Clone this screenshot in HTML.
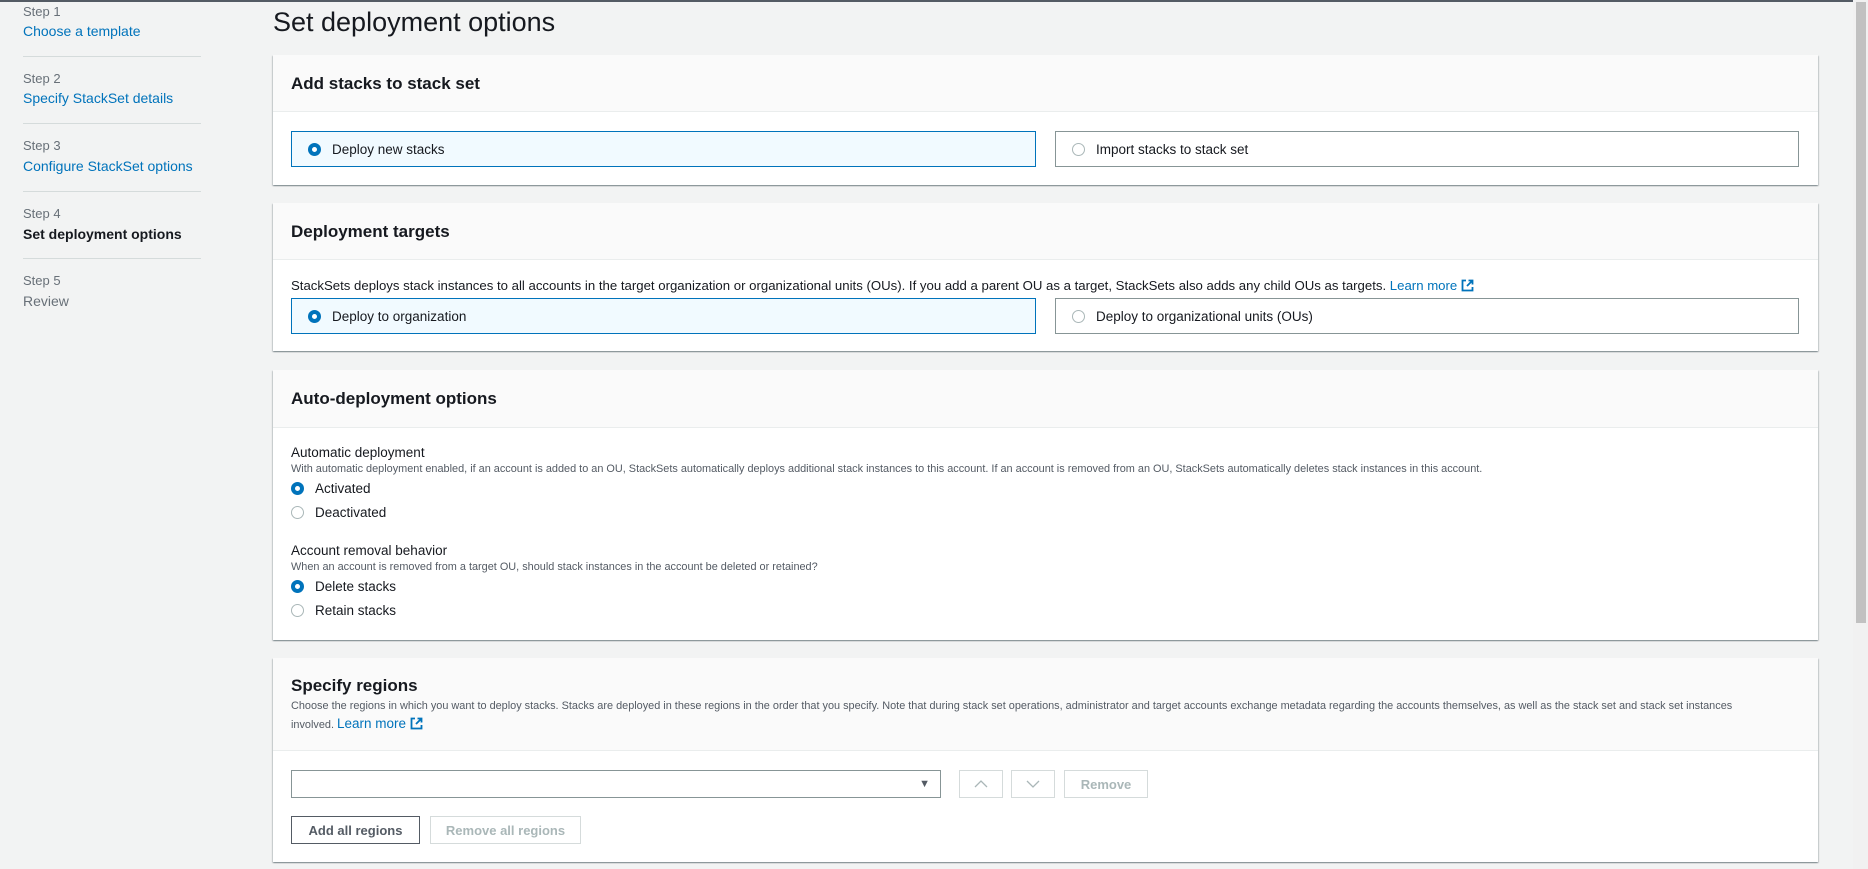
<!DOCTYPE html>
<html><head><meta charset="utf-8"><style>
*{box-sizing:border-box;margin:0;padding:0}
body{width:1868px;height:869px;overflow:hidden;background:#f2f3f3;font-family:"Liberation Sans",sans-serif;color:#16191f;position:relative}
.a{position:absolute;white-space:nowrap}
.top{position:absolute;left:0;top:0;width:1853px;height:2px;background:#545b64}
.sb{position:absolute;left:1853px;top:0;width:15px;height:869px;background:#f1f1f1}
.sb div{position:absolute;left:3px;top:2px;width:10px;height:621px;background:#c1c1c1}
.step{font-size:13px;color:#687078}
.lnk{font-size:14px;color:#0073bb}
.div{position:absolute;left:23px;width:178px;height:1px;background:#d5dbdb}
.panel{position:absolute;left:273px;width:1545px;background:#fff;box-shadow:0 1px 1px 0 rgba(0,28,36,.3),1px 1px 1px 0 rgba(0,28,36,.15),-1px 1px 1px 0 rgba(0,28,36,.15)}
.hd{position:absolute;left:0;top:0;width:100%;background:#fafafa;border-bottom:1px solid #eaeded}
.h2{font-size:17px;font-weight:bold}
.box{position:absolute;height:36px;border:1px solid #879596;font-size:13.5px;display:flex;align-items:center;padding-left:16px}
.box.sel{background:#f1faff;border-color:#0073bb}
.r{display:inline-block;width:13px;height:13px;border-radius:50%;border:1px solid #aab7b8;background:#fff;margin-right:11px;flex:none}
.r.on{border:4px solid #0073bb}
.t14{font-size:13.5px}
.t12{font-size:10.9px;color:#545b64}
.btn{position:absolute;border:1px solid #d5dbdb;background:#fff;color:#aab7b8;font-size:13px;font-weight:bold;display:flex;align-items:center;justify-content:center}
.ext{display:inline-block;vertical-align:-2px;margin-left:4px}
</style></head><body>
<div class="top"></div>
<div class="sb"><div></div></div>

<div class="a step" style="left:23px;top:4px">Step 1</div>
<div class="a lnk" style="left:23px;top:23px">Choose a template</div>
<div class="div" style="top:56px"></div>
<div class="a step" style="left:23px;top:71px">Step 2</div>
<div class="a lnk" style="left:23px;top:90px">Specify StackSet details</div>
<div class="div" style="top:123px"></div>
<div class="a step" style="left:23px;top:138px">Step 3</div>
<div class="a lnk" style="left:23px;top:158px">Configure StackSet options</div>
<div class="div" style="top:191px"></div>
<div class="a step" style="left:23px;top:206px">Step 4</div>
<div class="a lnk" style="left:23px;top:226px;color:#16191f;font-weight:bold">Set deployment options</div>
<div class="div" style="top:258px"></div>
<div class="a step" style="left:23px;top:273px">Step 5</div>
<div class="a lnk" style="left:23px;top:293px;color:#687078">Review</div>

<div class="a" style="left:273px;top:7px;font-size:27px;color:#16191f">Set deployment options</div>

<div class="panel" style="top:55px;height:130px">
 <div class="hd" style="height:57px"><div class="a h2" style="left:18px;top:19px">Add stacks to stack set</div></div>
 <div class="box sel" style="left:18px;top:76px;width:745px"><span class="r on"></span>Deploy new stacks</div>
 <div class="box" style="left:782px;top:76px;width:744px"><span class="r"></span>Import stacks to stack set</div>
</div>

<div class="panel" style="top:203px;height:148px">
 <div class="hd" style="height:57px"><div class="a h2" style="left:18px;top:19px">Deployment targets</div></div>
 <div class="a t14" style="left:18px;top:75px;font-size:13.2px">StackSets deploys stack instances to all accounts in the target organization or organizational units (OUs). If you add a parent OU as a target, StackSets also adds any child OUs as targets. <span style="color:#0073bb">Learn more<svg class="ext" width="13" height="13" viewBox="0 0 13 13"><path d="M5 1.5H1.5v10h10V8M7.5 1.5h4v4M11.5 1.5 6 7" fill="none" stroke="#0073bb" stroke-width="1.8"/></svg></span></div>
 <div class="box sel" style="left:18px;top:95px;width:745px"><span class="r on"></span>Deploy to organization</div>
 <div class="box" style="left:782px;top:95px;width:744px"><span class="r"></span>Deploy to organizational units (OUs)</div>
</div>

<div class="panel" style="top:370px;height:270px">
 <div class="hd" style="height:58px"><div class="a h2" style="left:18px;top:19px">Auto-deployment options</div></div>
 <div class="a t14" style="left:18px;top:75px">Automatic deployment</div>
 <div class="a t12" style="left:18px;top:93px">With automatic deployment enabled, if an account is added to an OU, StackSets automatically deploys additional stack instances to this account. If an account is removed from an OU, StackSets automatically deletes stack instances in this account.</div>
 <div class="a t14" style="left:18px;top:111px;display:flex;align-items:center"><span class="r on"></span>Activated</div>
 <div class="a t14" style="left:18px;top:135px;display:flex;align-items:center"><span class="r"></span>Deactivated</div>
 <div class="a t14" style="left:18px;top:173px">Account removal behavior</div>
 <div class="a t12" style="left:18px;top:191px">When an account is removed from a target OU, should stack instances in the account be deleted or retained?</div>
 <div class="a t14" style="left:18px;top:209px;display:flex;align-items:center"><span class="r on"></span>Delete stacks</div>
 <div class="a t14" style="left:18px;top:233px;display:flex;align-items:center"><span class="r"></span>Retain stacks</div>
</div>

<div class="panel" style="top:658px;height:204px">
 <div class="hd" style="height:93px">
  <div class="a h2" style="left:18px;top:18px">Specify regions</div>
  <div class="a t12" style="left:18px;top:42px">Choose the regions in which you want to deploy stacks. Stacks are deployed in these regions in the order that you specify. Note that during stack set operations, administrator and target accounts exchange metadata regarding the accounts themselves, as well as the stack set and stack set instances</div>
  <div class="a t12" style="left:18px;top:58px">involved. <span style="color:#0073bb;font-size:13.5px">Learn more<svg class="ext" width="13" height="13" viewBox="0 0 13 13"><path d="M5 1.5H1.5v10h10V8M7.5 1.5h4v4M11.5 1.5 6 7" fill="none" stroke="#0073bb" stroke-width="1.8"/></svg></span></div>
 </div>
 <div class="a" style="left:18px;top:112px;width:650px;height:28px;border:1px solid #879596;background:#fff"><span class="a" style="right:10px;top:7px;font-size:11px;color:#545b64">&#9660;</span></div>
 <div class="btn" style="left:686px;top:112px;width:44px;height:28px"><svg width="14" height="8" viewBox="0 0 14 8"><path d="M1 7 7 1l6 6" fill="none" stroke="#aab7b8" stroke-width="1.3"/></svg></div>
 <div class="btn" style="left:738px;top:112px;width:44px;height:28px"><svg width="14" height="8" viewBox="0 0 14 8"><path d="M1 1l6 6 6-6" fill="none" stroke="#aab7b8" stroke-width="1.3"/></svg></div>
 <div class="btn" style="left:791px;top:112px;width:84px;height:28px">Remove</div>
 <div class="btn" style="left:18px;top:158px;width:129px;height:28px;border-color:#545b64;color:#545b64">Add all regions</div>
 <div class="btn" style="left:157px;top:158px;width:151px;height:28px">Remove all regions</div>
</div>
</body></html>
